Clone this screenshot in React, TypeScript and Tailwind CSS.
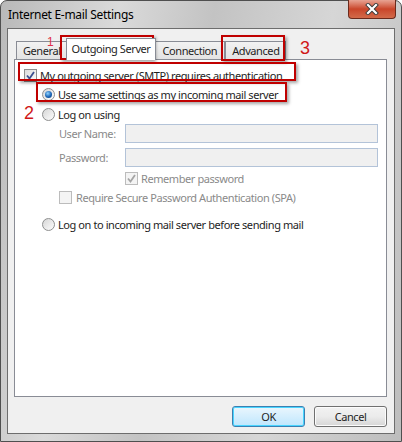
import type { ReactNode } from 'react';

const font = { fontFamily: '"Segoe UI", "Noto Sans", "Liberation Sans", sans-serif' };
const markFont = { fontFamily: '"Liberation Sans", sans-serif' };

const CheckBox = ({ checked = false, disabled = false }: { checked?: boolean; disabled?: boolean }) => (
  <span
    className={`relative inline-flex h-[13px] w-[13px] shrink-0 items-center justify-center border ${
      disabled ? 'border-[#bcbcbc] bg-[#f4f4f4]' : 'border-[#8e8f8f] bg-gradient-to-br from-[#dcdcdc] to-[#fbfbfb]'
    }`}
  >
    {checked && (
      <svg width="11" height="11" viewBox="0 0 11 11" className="absolute">
        <path
          d="M2 5.5 L4.5 8.5 L9 2"
          fill="none"
          stroke={disabled ? '#a5a5a5' : '#3a4f8f'}
          strokeWidth="1.8"
        />
      </svg>
    )}
  </span>
);

const Radio = ({ checked = false }: { checked?: boolean }) => (
  <span className="relative inline-flex h-[13px] w-[13px] shrink-0 items-center justify-center rounded-full border border-[#8e8f8f] bg-gradient-to-br from-[#d6d6d6] to-[#fdfdfd]">
    {checked && (
      <span className="h-[7px] w-[7px] rounded-full bg-[radial-gradient(circle_at_40%_35%,#8fd3ff,#1b64b5_55%,#0c3d7a)]" />
    )}
  </span>
);

const Tab = ({ label, active = false, className = 'px-[6px]' }: { label: string; active?: boolean; className?: string }) => (
  <div
    className={
      active
        ? `relative z-10 -mx-[2px] -mb-px flex h-[22px] items-center border border-b-0 border-[#898c95] bg-white pb-[2px] ${className}`
        : `flex h-[18px] items-center border border-b-0 border-[#898c95] bg-gradient-to-b from-[#f2f2f2] to-[#e3e3e3] ${className}`
    }
  >
    {label}
  </div>
);

const RedBox = ({ className }: { className: string }) => (
  <div
    className={`pointer-events-none absolute border-2 border-[#c00000] shadow-[2px_2px_3px_rgba(0,0,0,0.35)] ${className}`}
  />
);

const Row = ({ children, className = '' }: { children: ReactNode; className?: string }) => (
  <div className={`flex h-[16px] items-center whitespace-nowrap ${className}`}>{children}</div>
);

export default function App() {
  return (
    <div
      className="relative h-[442px] w-[402px] overflow-hidden text-[11px] leading-none tracking-[-0.42px] text-[#1e1e1e]"
      style={font}
    >
      {/* window frame */}
      <div className="flex h-full flex-col rounded-t-[7px] border border-[#4f4f4f] bg-[linear-gradient(100deg,#b9b9b9,#dadada_25%,#c3c3c3_45%,#d6d6d6_70%,#bdbdbd)] px-[6px] pb-[7px]">
        {/* title bar */}
        <div className="relative flex h-[27px] shrink-0 items-center pl-[1px]">
          <span className="text-[12px] tracking-[-0.3px] text-black">Internet E-mail Settings</span>
          <div className="absolute -top-px right-[-1px] flex h-[19px] w-[48px] items-center justify-center rounded-b-[4px] border border-t-0 border-[#6b2a1c] bg-gradient-to-b from-[#e7a393] via-[#c9452a] to-[#d26a4a]">
            <svg width="14" height="12" viewBox="0 0 14 12">
              <path d="M3 2 L11 10 M11 2 L3 10" stroke="#3a3a3a" strokeWidth="4" strokeLinecap="square" />
              <path d="M3 2 L11 10 M11 2 L3 10" stroke="#ffffff" strokeWidth="2.2" strokeLinecap="square" />
            </svg>
          </div>
        </div>

        {/* client area */}
        <div className="flex flex-1 flex-col border border-[#6d6d6d] bg-[#f0f0f0] pl-[6px] pr-[7px] pt-[9px]">
          {/* tab strip */}
          <div className="flex h-[21px] items-end pl-[2px]">
            <Tab label="General" />
            <Tab label="Outgoing Server" active className="px-[5px]" />
            <Tab label="Connection" className="px-[7px]" />
            <Tab label="Advanced" />
          </div>

          {/* tab panel */}
          <div className="flex h-[338px] flex-col border border-[#898c95] bg-white pl-[9px] pt-[7px]">
            <Row className="gap-[3px]">
              <CheckBox checked />
              <span>My outgoing server (SMTP) requires authentication</span>
            </Row>
            <div className="flex flex-col pl-[18px]">
              <Row className="mt-[3px] gap-[3px]">
                <Radio checked />
                <span>Use same settings as my incoming mail server</span>
              </Row>
              <Row className="mt-[4px] gap-[3px]">
                <Radio />
                <span>Log on using</span>
              </Row>
              <div className="mt-[2px] flex flex-col pl-[17px] text-[#8a8a8a]">
                <div className="flex items-center whitespace-nowrap">
                  <span className="w-[66px]">User Name:</span>
                  <div className="h-[19px] w-[253px] border border-[#b3c3d8] bg-[#f0f0f0]" />
                </div>
                <div className="mt-[5px] flex items-center whitespace-nowrap">
                  <span className="w-[66px]">Password:</span>
                  <div className="h-[19px] w-[253px] border border-[#b3c3d8] bg-[#f0f0f0]" />
                </div>
                <Row className="mt-[3px] gap-[3px] pl-[66px]">
                  <CheckBox checked disabled />
                  <span>Remember password</span>
                </Row>
                <Row className="mt-[3px] gap-[4px]">
                  <CheckBox disabled />
                  <span>Require Secure Password Authentication (SPA)</span>
                </Row>
              </div>
              <Row className="mt-[11px] gap-[3px]">
                <Radio />
                <span>Log on to incoming mail server before sending mail</span>
              </Row>
            </div>
          </div>

          {/* buttons */}
          <div className="mt-[9px] flex justify-end gap-[9px]">
            <button className="flex h-[21px] w-[73px] items-center justify-center rounded-[3px] border border-[#3c7fb1] bg-gradient-to-b from-[#eaf6fd] to-[#bee6fd] shadow-[inset_0_0_0_1px_#48d5ff]">
              OK
            </button>
            <button className="flex h-[21px] w-[73px] items-center justify-center rounded-[3px] border border-[#707070] bg-gradient-to-b from-[#f2f2f2] via-[#ebebeb] to-[#d6d6d6] shadow-[inset_0_0_0_1px_#fcfcfc]">
              Cancel
            </button>
          </div>
        </div>
      </div>

      {/* annotations */}
      <RedBox className="left-[60px] top-[35px] h-[25px] w-[94px]" />
      <RedBox className="left-[221px] top-[35px] h-[26px] w-[64px]" />
      <RedBox className="left-[18px] top-[62px] h-[19px] w-[278px]" />
      <RedBox className="left-[36px] top-[82px] h-[20px] w-[251px]" />
      <span className="absolute left-[47px] top-[36px] text-[12px] text-[#e0304a]" style={markFont}>
        1
      </span>
      <span className="absolute left-[24px] top-[104px] text-[18px] text-[#d01818]" style={markFont}>
        2
      </span>
      <span className="absolute left-[300px] top-[39px] text-[18px] text-[#d01818]" style={markFont}>
        3
      </span>
    </div>
  );
}
